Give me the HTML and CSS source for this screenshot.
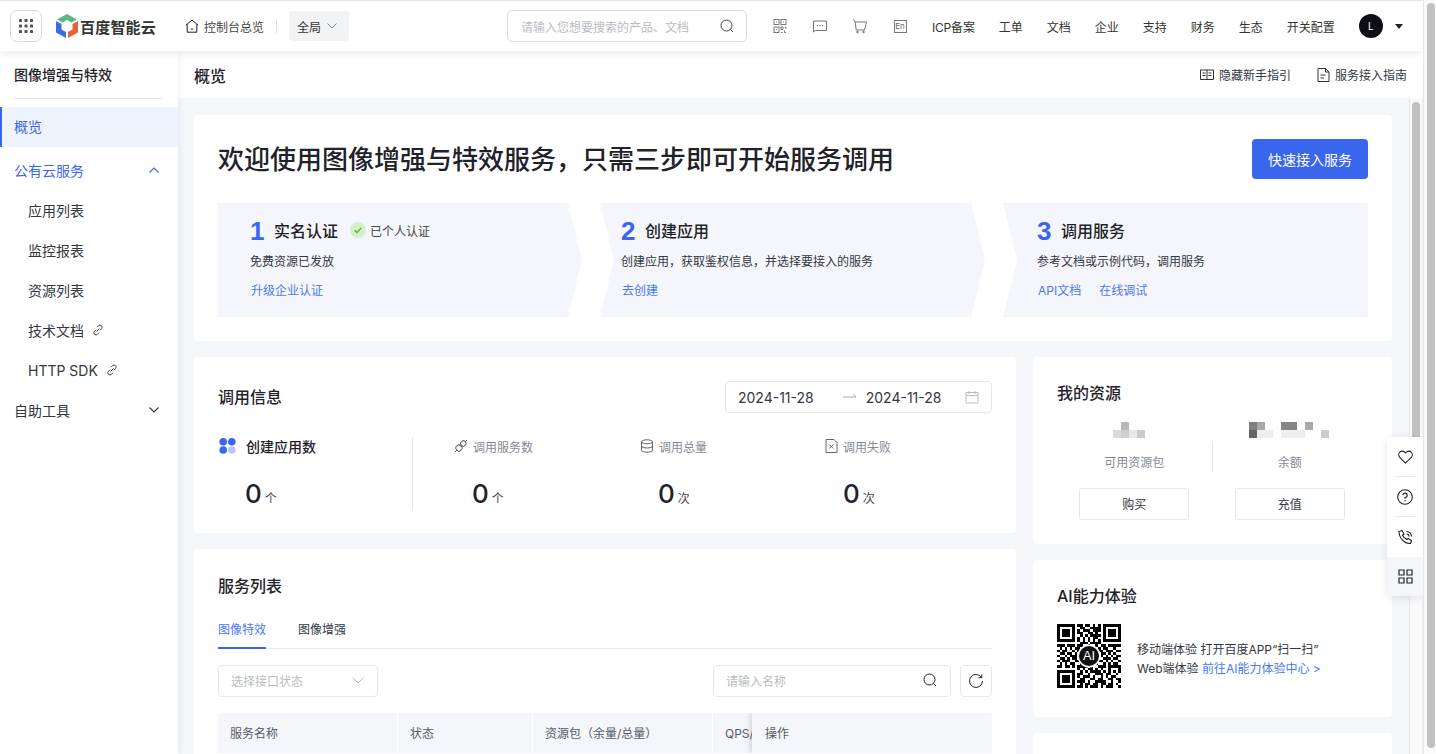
FILE: index.html
```html
<!DOCTYPE html>
<html lang="zh">
<head>
    <meta charset="UTF-8">
    <meta name="viewport" content="width=device-width, initial-scale=1.0">
    <title>图像增强与特效 - 概览</title>
    <link rel="stylesheet" href="styles.css">
</head>
<body>
<div class="page">
    <div class="app">
        <!-- 顶部导航 -->
        <header class="topbar">
            <button class="apps-btn" aria-label="产品">
                <svg width="14" height="14" viewBox="0 0 14 14" fill="#555"><rect x="0" y="0" width="3" height="3" rx=".6"/><rect x="5.5" y="0" width="3" height="3" rx=".6"/><rect x="11" y="0" width="3" height="3" rx=".6"/><rect x="0" y="5.5" width="3" height="3" rx=".6"/><rect x="5.5" y="5.5" width="3" height="3" rx=".6"/><rect x="11" y="5.5" width="3" height="3" rx=".6"/><rect x="0" y="11" width="3" height="3" rx=".6"/><rect x="5.5" y="11" width="3" height="3" rx=".6"/><rect x="11" y="11" width="3" height="3" rx=".6"/></svg>
            </button>
            <div class="logo">
                <svg width="22" height="24" viewBox="0 0 22 24"><path fill="#5cb585" d="M11 0l10 5.500-5.500 3L11 6 6.500 8.500 1 5.500z"/><path fill="#3b6de8" d="M0 7l5.500 3v5.500l4.500 2.500v6L0 18.500z"/><path fill="#e2633c" d="M22 7l-5.500 3v5.500L12 18v6l10-5.500z"/></svg>
                <span class="logo-text">百度智能云</span>
            </div>
            <a class="home-link">
                <svg width="14" height="14" viewBox="0 0 14 14" fill="none" stroke="#222" stroke-width="1"><path d="M.8 6.200L7 1l6.200 5.200M2.200 5.200v8h9.600v-8"/><path d="M5.800 10h2.400"/></svg>
                控制台总览
            </a>
            <span class="top-divider"></span>
            <div class="region">全局
                <svg width="10" height="6" viewBox="0 0 10 6" fill="none" stroke="#888"><path d="M.5.500L5 5 9.500.500"/></svg>
            </div>
            <div class="top-search">
                <span>请输入您想要搜索的产品、文档</span>
                <svg width="14" height="14" viewBox="0 0 14 14" fill="none" stroke="#444"><circle cx="6.500" cy="6.500" r="5.500"/><path d="M10.500 10.500l2.500 2.500"/></svg>
            </div>
            <div class="top-icons">
                <svg width="16" height="16" viewBox="0 0 16 16" fill="none" stroke="#777"><rect x="2" y="1.500" width="5" height="5"/><rect x="9" y="1.500" width="5" height="5"/><rect x="2" y="9" width="5" height="5.500"/><path d="M9 9h2v2.500H9zM13 9h1v2M9 14.500h1.500M12.500 12.500v2h1.500"/><path d="M4 3.500h1v1H4zM11 3.500h1v1h-1zM4 11.200h1v1H4z" fill="#777" stroke="none"/></svg>
                <svg width="16" height="16" viewBox="0 0 16 16" fill="none" stroke="#777"><path d="M1.500 3h13v9.500H3.500l-2 1.500z"/><path d="M5 7.700h1.200M7.500 7.700h1.200M10 7.700h1.200" stroke-width="1.200"/></svg>
                <svg width="16" height="16" viewBox="0 0 16 16" fill="none" stroke="#777"><path d="M1 1.500l2 1.500 1.200 9h8.300L14.500 4H3.300"/><circle cx="5.500" cy="14" r=".8" fill="#777"/><circle cx="11.500" cy="14" r=".8" fill="#777"/></svg>
                <span class="lang-icon">En</span>
            </div>
            <nav class="top-nav">
                <a>ICP备案</a><a>工单</a><a>文档</a><a>企业</a><a>支持</a><a>财务</a><a>生态</a><a>开关配置</a>
            </nav>
            <div class="avatar">L</div>
            <span class="caret"></span>
        </header>

        <div class="layout">
            <!-- 左侧菜单 -->
            <aside class="sidebar">
                <h2 class="side-title">图像增强与特效</h2>
                <ul class="menu">
                    <li class="menu-item active">概览</li>
                    <li class="menu-item group open">公有云服务
                        <svg width="10" height="6" viewBox="0 0 10 6" fill="none" stroke="#3a66ee" stroke-width="1.100"><path d="M.5 5.500L5 1l4.500 4.500"/></svg>
                    </li>
                    <li class="menu-item sub">应用列表</li>
                    <li class="menu-item sub">监控报表</li>
                    <li class="menu-item sub">资源列表</li>
                    <li class="menu-item sub">技术文档
                        <svg class="chain" width="12" height="12" viewBox="0 0 12 12" fill="none" stroke="#444"><path d="M5 3.200l1.500-1.500a2.100 2.100 0 013 3L8 6.200M7 8.800l-1.500 1.500a2.100 2.100 0 01-3-3L4 5.800M4.500 7.500l3-3"/></svg>
                    </li>
                    <li class="menu-item sub">HTTP SDK
                        <svg class="chain" width="12" height="12" viewBox="0 0 12 12" fill="none" stroke="#444"><path d="M5 3.200l1.500-1.500a2.100 2.100 0 013 3L8 6.200M7 8.800l-1.500 1.500a2.100 2.100 0 01-3-3L4 5.800M4.500 7.500l3-3"/></svg>
                    </li>
                    <li class="menu-item group">自助工具
                        <svg width="10" height="6" viewBox="0 0 10 6" fill="none" stroke="#333" stroke-width="1.100"><path d="M.5.500L5 5 9.500.500"/></svg>
                    </li>
                </ul>
            </aside>

            <main class="main">
                <div class="title-bar">
                    <h1>概览</h1>
                    <div class="title-actions">
                        <a>
                            <svg width="14" height="12" viewBox="0 0 14 12" fill="none" stroke="#333"><path d="M.5 1h13v9.500H.5zM7 1v9.500M2.500 4h3M8.500 4h3M2.500 6.500h3M8.500 6.500h3"/></svg>
                            隐藏新手指引
                        </a>
                        <a>
                            <svg width="13" height="14" viewBox="0 0 13 14" fill="none" stroke="#333"><path d="M1 .5h7.500L12 4v9.500H1zM8.500.5V4H12M3.500 7h5M3.500 10h3.500"/></svg>
                            服务接入指南
                        </a>
                    </div>
                </div>

                <div class="body-row">
                    <div class="content">
                        <section class="card hero">
                            <div class="hero-head">
                                <h2>欢迎使用图像增强与特效服务，只需三步即可开始服务调用</h2>
                                <button class="primary-btn">快速接入服务</button>
                            </div>
                            <div class="steps">
                                <div class="step step-first">
                                    <div class="step-title"><b>1</b><strong>实名认证</strong>
                                        <span class="verified">
                                            <svg width="16" height="16" viewBox="0 0 16 16"><circle cx="8" cy="8" r="8" fill="#d5efcb"/><path d="M4.800 8.200l2.200 2.200 4.200-4.400" fill="none" stroke="#52b52f" stroke-width="1.400"/></svg>
                                            已个人认证
                                        </span>
                                    </div>
                                    <p>免费资源已发放</p>
                                    <div class="step-links"><a>升级企业认证</a></div>
                                </div>
                                <div class="step step-middle">
                                    <div class="step-title"><b>2</b><strong>创建应用</strong></div>
                                    <p>创建应用，获取鉴权信息，并选择要接入的服务</p>
                                    <div class="step-links"><a>去创建</a></div>
                                </div>
                                <div class="step step-last">
                                    <div class="step-title"><b>3</b><strong>调用服务</strong></div>
                                    <p>参考文档或示例代码，调用服务</p>
                                    <div class="step-links"><a>API文档</a><a>在线调试</a></div>
                                </div>
                            </div>
                        </section>

                        <div class="columns">
                            <div class="col-left">
                                <section class="card info">
                                    <div class="info-head">
                                        <h3>调用信息</h3>
                                        <div class="date-range">
                                            <span>2024-11-28</span>
                                            <svg class="range-arrow" width="14" height="6" viewBox="0 0 14 6" fill="none" stroke="#aaa"><path d="M0 3h13M10.500.5L13 3"/></svg>
                                            <span>2024-11-28</span>
                                            <svg class="calendar" width="14" height="14" viewBox="0 0 14 14" fill="none" stroke="#bbb"><path d="M1 2.500h12v10.500H1zM1 5.500h12M4 1v3M10 1v3"/></svg>
                                        </div>
                                    </div>
                                    <div class="stats">
                                        <div class="stat stat-main">
                                            <div class="stat-label">
                                                <svg width="17" height="16" viewBox="0 0 17 16"><circle cx="4.200" cy="3.800" r="3.800" fill="#3a66ee"/><circle cx="12.800" cy="3.800" r="3.800" fill="#3a66ee"/><circle cx="4.200" cy="12" r="3.800" fill="#3a66ee"/><circle cx="12.800" cy="12" r="3.800" fill="#b5c9f8"/></svg>
                                                <span>创建应用数</span>
                                            </div>
                                            <div class="stat-value">0<small>个</small></div>
                                        </div>
                                        <div class="stat stat-second">
                                            <div class="stat-label">
                                                <svg width="14" height="14" viewBox="0 0 14 14" fill="none" stroke="#666"><path d="M1 13l2-2M13 1l-2 2"/><rect x="2.200" y="6.200" width="5.500" height="5.500" rx="1.500" transform="rotate(-45 5 9)"/><rect x="6.800" y="2" width="5" height="5" rx="1.500" transform="rotate(-45 9.300 4.500)"/></svg>
                                                <span>调用服务数</span>
                                            </div>
                                            <div class="stat-value">0<small>个</small></div>
                                        </div>
                                        <div class="stat">
                                            <div class="stat-label">
                                                <svg width="14" height="14" viewBox="0 0 14 14" fill="none" stroke="#666"><ellipse cx="7" cy="2.800" rx="5.500" ry="2"/><path d="M1.500 2.800v8.400c0 1.100 2.500 2 5.500 2s5.500-.9 5.500-2V2.800M1.500 7c0 1.100 2.500 2 5.500 2s5.500-.9 5.500-2"/></svg>
                                                <span>调用总量</span>
                                            </div>
                                            <div class="stat-value">0<small>次</small></div>
                                        </div>
                                        <div class="stat">
                                            <div class="stat-label">
                                                <svg width="13" height="14" viewBox="0 0 13 14" fill="none" stroke="#666"><path d="M1 .5h8L12 3.500v10H1zM4.300 5.500l4 4M8.300 5.500l-4 4"/></svg>
                                                <span>调用失败</span>
                                            </div>
                                            <div class="stat-value">0<small>次</small></div>
                                        </div>
                                    </div>
                                </section>

                                <section class="card services">
                                    <h3>服务列表</h3>
                                    <div class="tabs">
                                        <a class="tab active">图像特效</a>
                                        <a class="tab">图像增强</a>
                                    </div>
                                    <div class="filters">
                                        <div class="field select-field">选择接口状态
                                            <svg width="12" height="7" viewBox="0 0 12 7" fill="none" stroke="#bbb"><path d="M.5.500l5.500 5.500L11.500.500"/></svg>
                                        </div>
                                        <div class="field search-field">请输入名称
                                            <svg width="14" height="14" viewBox="0 0 14 14" fill="none" stroke="#222"><circle cx="6.500" cy="6.500" r="5.500"/><path d="M10.500 10.500l2.500 2.500"/></svg>
                                        </div>
                                        <button class="refresh-btn" aria-label="刷新">
                                            <svg width="16" height="16" viewBox="0 0 16 16" fill="none" stroke="#222"><path d="M13.500 4.500A6.500 6.500 0 1014.500 8"/><path d="M10.500 4.700h3.300V1.400"/></svg>
                                        </button>
                                    </div>
                                    <div class="table-head">
                                        <div class="th th-name">服务名称</div>
                                        <div class="th th-state">状态</div>
                                        <div class="th th-pack">资源包（余量/总量）</div>
                                        <div class="th th-qps">QPS/</div>
                                        <div class="th th-action">操作</div>
                                    </div>
                                </section>
                            </div>

                            <div class="col-right">
                                <section class="card resources">
                                    <h3>我的资源</h3>
                                    <div class="res-grid">
                                        <div class="res-item">
                                            <svg class="mosaic mosaic-pack" width="32" height="16" viewBox="0 0 32 16"><rect x="8" y="0" width="8" height="8" fill="#b8b8b8"/><rect x="0" y="8" width="8" height="8" fill="#dadada"/><rect x="8" y="8" width="8" height="8" fill="#d0d0d0"/><rect x="16" y="8" width="8" height="8" fill="#e8e8e8"/><rect x="24" y="8" width="8" height="8" fill="#cacaca"/></svg>
                                            <span class="res-label">可用资源包</span>
                                            <button class="plain-btn">购买</button>
                                        </div>
                                        <span class="res-divider"></span>
                                        <div class="res-item">
                                            <svg class="mosaic mosaic-money" width="80" height="16" viewBox="0 0 80 16"><rect x="0" y="0" width="8" height="8" fill="#808080"/><rect x="8" y="0" width="8" height="8" fill="#a8a8a8"/><rect x="32" y="0" width="16" height="8" fill="#858585"/><rect x="56" y="0" width="8" height="8" fill="#a8a8a8"/><rect x="0" y="8" width="8" height="8" fill="#666"/><rect x="8" y="8" width="16" height="8" fill="#eee"/><rect x="32" y="8" width="24" height="8" fill="#eee"/><rect x="72" y="8" width="8" height="8" fill="#ccc"/></svg>
                                            <span class="res-label">余额</span>
                                            <button class="plain-btn">充值</button>
                                        </div>
                                    </div>
                                </section>

                                <section class="card ai-card">
                                    <h3>AI能力体验</h3>
                                    <div class="ai-body">
                                        <svg class="qr" width="64" height="64" viewBox="0 0 25 25" shape-rendering="crispEdges">
                                            <path fill="#000" d="M0 0h7v7H0zM1 1v5h5V1zM2 2h3v3H2zM18 0h7v7h-7zM19 1v5h5V1zM20 2h3v3h-3zM0 18h7v7H0zM1 19v5h5v-5zM2 20h3v3H2z" fill-rule="evenodd"/>
                                            <path stroke="#000" fill="none" d="M8 .5h2M11 .5h2M14 .5h1M16 .5h1M9 1.500h2M13 1.500h2M15 1.500h2M8 2.500h1M10 2.500h3M14 2.500h3M8 3.500h2M12 3.500h2M15 3.500h1M9 4.500h1M11 4.500h1M13 4.500h4M8 5.500h1M10 5.500h1M12 5.500h1M14 5.500h2M8 6.500h1M10 6.500h1M12 6.500h1M14 6.500h1M16 6.500h1M9 7.500h3M13 7.500h4M0 8.500h3M4 8.500h3M8 8.500h2M12 8.500h1M15 8.500h1M17 8.500h2M20 8.500h5M1 9.500h1M3 9.500h1M5 9.500h1M7 9.500h2M10 9.500h2M16 9.500h1M18 9.500h2M22 9.500h1M0 10.500h1M2 10.500h2M6 10.500h1M8 10.500h1M16 10.500h2M19 10.500h3M23 10.500h2M1 11.500h2M4 11.500h2M7 11.500h1M17 11.500h2M20 11.500h1M22 11.500h1M0 12.500h1M3 12.500h1M5 12.500h3M17 12.500h1M19 12.500h1M21 12.500h1M23 12.500h2M1 13.500h2M4 13.500h1M6 13.500h2M18 13.500h3M22 13.500h2M0 14.500h1M2 14.500h3M7 14.500h2M16 14.500h2M19 14.500h1M21 14.500h1M24 14.500h1M1 15.500h1M3 15.500h1M5 15.500h2M9 15.500h2M14 15.500h2M18 15.500h1M20 15.500h1M22 15.500h2M0 16.500h2M3 16.500h2M6 16.500h1M8 16.500h4M13 16.500h1M16 16.500h3M20 16.500h5M8 17.500h1M10 17.500h1M12 17.500h2M15 17.500h1M17 17.500h1M20 17.500h1M24 17.500h1M9 18.500h1M11 18.500h1M13 18.500h4M18 18.500h1M20 18.500h1M22 18.500h1M24 18.500h1M8 19.500h2M12 19.500h1M15 19.500h3M19 19.500h2M23 19.500h1M8 20.500h1M10 20.500h3M14 20.500h1M17 20.500h1M19 20.500h1M21 20.500h2M9 21.500h2M13 21.500h2M16 21.500h2M20 21.500h2M23 21.500h2M8 22.500h3M12 22.500h1M15 22.500h3M18 22.500h1M21 22.500h1M24 22.500h1M9 23.500h1M11 23.500h2M14 23.500h2M17 23.500h2M20 23.500h2M23 23.500h1M8 24.500h2M11 24.500h1M13 24.500h3M17 24.500h1M19 24.500h3M24 24.500h1"/>
                                            <circle cx="12.500" cy="12.500" r="4.200" fill="#111" stroke="#fff" stroke-width=".6" shape-rendering="auto"/>
                                            <text x="12.500" y="14.200" text-anchor="middle" class="qr-text">AI</text>
                                        </svg>
                                        <div class="ai-text">
                                            <p>移动端体验 打开百度APP“扫一扫”</p>
                                            <p>Web端体验 <a>前往AI能力体验中心 &gt;</a></p>
                                        </div>
                                    </div>
                                </section>

                                <section class="card blank-card"></section>
                            </div>
                        </div>
                    </div>

                    <div class="inner-scroll"><span class="thumb"></span></div>
                </div>
            </main>
        </div>

        <!-- 右侧悬浮工具 -->
        <div class="float-tools">
            <div class="tool">
                <svg width="15" height="14" viewBox="0 0 16 15" fill="none" stroke="#222" stroke-width="1.100"><path d="M8 14L1.800 7.800a3.800 3.800 0 010-5.400 3.900 3.900 0 015.300 0L8 3.200l1-.9a3.900 3.900 0 015.200.1 3.800 3.800 0 010 5.400z"/></svg>
            </div>
            <div class="tool">
                <svg width="16" height="16" viewBox="0 0 16 16" fill="none" stroke="#222" stroke-width="1.100"><circle cx="8" cy="8" r="7.300"/><path d="M5.800 6.300A2.200 2.200 0 118 8.500v1.300"/><path d="M8 11v1.300"/></svg>
            </div>
            <div class="tool">
                <svg width="15" height="15" viewBox="0 0 15 15" fill="none" stroke="#222" stroke-width="1.100"><path d="M1 1.500l3-1 2 3.500-1.500 1.200c.8 2 2.300 3.500 4.300 4.300L10 8.500l3.500 2-1 3C6.500 14 1 8 1 1.500z"/><path d="M8.500 1.500a5 5 0 015 5M8.500 4a2.500 2.500 0 012.500 2.500"/></svg>
            </div>
            <div class="tool tool-active">
                <svg width="15" height="15" viewBox="0 0 15 15" fill="none" stroke="#222" stroke-width="1.200"><path d="M1 1h5v5H1zM9 1h5v5H9zM1 9h5v5H1zM9 9h5v5H9z"/></svg>
            </div>
        </div>
    </div>
    <div class="outer-scroll"><span class="thumb"></span></div>
</div>
</body>
</html>
```

FILE: styles.css
```css
:root {
    --primary-color: #3a66ee;
    --link-color: #4a78f0;
    --background-color: #f5f6f9;
    --card-background: #ffffff;
    --text-color: #1f2229;
    --text-soft: #555b66;
    --text-muted: #858a94;
    --text-hold: #b9bcc4;
    --border-color: #e6e8ec;
}

* {
    box-sizing: border-box;
}

body {
    margin: 0;
    font-family: Inter, 'Noto Sans CJK SC', sans-serif;
    font-size: 12px;
    color: var(--text-color);
    background: #fff;
    overflow: hidden;
}

h1, h2, h3, p, ul {
    margin: 0;
    padding: 0;
}

.page {
    display: flex;
    height: 754px;
    overflow: hidden;
}

.app {
    position: relative;
    flex: none;
    width: 1423px;
    display: flex;
    flex-direction: column;
    overflow: hidden;
}

.outer-scroll {
    flex: none;
    width: 13px;
    padding: 3px 1px 6px 3px;
    border-left: 1px solid var(--border-color);
    background: #fafafa;
}

.outer-scroll .thumb,
.inner-scroll .thumb {
    display: block;
    width: 8px;
    height: 100%;
    border-radius: 4px;
    background: #c1c1c1;
}

/* 顶部导航 */
.topbar {
    position: relative;
    z-index: 3;
    flex: none;
    height: 51px;
    display: flex;
    align-items: center;
    padding: 0 0 0 10px;
    background: #fff;
    border-top: 1px solid #e4e4e4;
    box-shadow: 0 2px 8px rgba(0, 0, 0, 0.09);
}

.apps-btn {
    width: 32px;
    height: 32px;
    display: flex;
    align-items: center;
    justify-content: center;
    padding: 0;
    background: #fff;
    border: 1px solid #d8d9dc;
    border-radius: 7px;
}

.logo {
    display: flex;
    align-items: center;
    gap: 2px;
    margin-left: 14px;
}

.logo-text {
    font-size: 15px;
    font-weight: 700;
    letter-spacing: 0.2px;
    color: #333;
}

.home-link {
    display: flex;
    align-items: center;
    gap: 5px;
    margin-left: 29px;
    color: #444;
}

.top-divider {
    width: 1px;
    height: 14px;
    margin: 0 12px;
    background: #e1e1e1;
}

.region {
    width: 60px;
    height: 30px;
    display: flex;
    align-items: center;
    justify-content: space-between;
    padding: 0 12px 0 8px;
    background: #f2f3f5;
    border-radius: 4px;
    color: #333;
}

.top-search {
    width: 240px;
    height: 32px;
    display: flex;
    align-items: center;
    justify-content: space-between;
    margin-left: 158px;
    padding: 0 12px 0 13px;
    border: 1px solid #d9dade;
    border-radius: 5px;
    color: var(--text-hold);
}

.top-icons {
    display: flex;
    align-items: center;
    gap: 24px;
    margin-left: 25px;
}

.top-icons svg {
    display: block;
}

.lang-icon {
    width: 13px;
    height: 13px;
    margin: 0 1.5px;
    border: 1px solid #777;
    color: #666;
    font-size: 8px;
    line-height: 11px;
    text-align: center;
}

.top-nav {
    display: flex;
    gap: 24px;
    margin-left: 24px;
    color: #333;
}

.top-nav a:first-child {
    letter-spacing: -0.2px;
}

.avatar {
    width: 24px;
    height: 24px;
    margin-left: 24px;
    background: #0d0f14;
    border-radius: 50%;
    color: #fff;
    font-size: 10px;
    line-height: 24px;
    text-align: center;
}

.caret {
    width: 0;
    height: 0;
    margin-left: 12px;
    border-left: 4px solid transparent;
    border-right: 4px solid transparent;
    border-top: 5px solid #222;
}

.layout {
    flex: 1;
    display: flex;
    min-height: 0;
}

/* 左侧菜单 */
.sidebar {
    position: relative;
    z-index: 2;
    flex: none;
    width: 178px;
    background: #fff;
    box-shadow: 1px 0 6px rgba(0, 0, 0, 0.07);
}

.side-title {
    height: 48px;
    margin: 0 16px 8px 14px;
    border-bottom: 1px solid var(--border-color);
    font-size: 14px;
    font-weight: 500;
    line-height: 47px;
}

.menu {
    list-style: none;
}

.menu-item {
    height: 40px;
    display: flex;
    align-items: center;
    padding-left: 14px;
    padding-bottom: 2px;
    font-size: 14px;
    color: #33373f;
}

.menu-item.active {
    padding-left: 12px;
    margin-bottom: 4px;
    background: #eef3fe;
    border-left: 2px solid var(--primary-color);
    color: var(--primary-color);
}

.menu-item.group {
    justify-content: space-between;
    padding-right: 19px;
}

.menu-item.open {
    color: var(--primary-color);
}

.menu-item.sub {
    padding-left: 28px;
}

.chain {
    margin-left: 8px;
}

/* 主内容 */
.main {
    flex: 1;
    min-width: 0;
    display: flex;
    flex-direction: column;
    background: var(--background-color);
}

.title-bar {
    flex: none;
    height: 47px;
    display: flex;
    align-items: center;
    justify-content: space-between;
    padding: 0 16px;
    background: #fff;
}

.title-bar h1 {
    font-size: 16px;
    font-weight: 500;
}

.title-actions {
    display: flex;
    gap: 26px;
    color: #33373f;
}

.title-actions a {
    display: flex;
    align-items: center;
    gap: 5px;
}

.body-row {
    flex: 1;
    min-height: 0;
    display: flex;
}

.content {
    flex: 1;
    min-width: 0;
    padding: 17px 17px 0 16px;
    overflow: hidden;
}

.inner-scroll {
    flex: none;
    width: 14px;
    padding: 4px 3px 0 2px;
    background: #fafafa;
    border-left: 1px solid var(--border-color);
    border-right: 1px solid #efefef;
}

.inner-scroll .thumb {
    height: 470px;
}

.card {
    background: var(--card-background);
    border-radius: 4px;
}

.card h3 {
    font-size: 16px;
    font-weight: 500;
    line-height: 22px;
}

/* 欢迎区 */
.hero {
    height: 226px;
    padding: 24px;
}

.hero-head {
    height: 64px;
    display: flex;
    justify-content: space-between;
}

.hero-head h2 {
    font-size: 26px;
    font-weight: 500;
    line-height: 42px;
}

.primary-btn {
    width: 116px;
    height: 40px;
    background: var(--primary-color);
    border: none;
    border-radius: 4px;
    color: #fff;
    font-family: inherit;
    font-size: 14px;
}

.steps {
    display: flex;
    gap: 18px;
}

.step {
    flex: none;
    height: 114px;
    padding-top: 14px;
    background: #f4f6fc;
}

.step-first {
    width: 364px;
    padding-left: 32px;
    clip-path: polygon(0 0, 350px 0, 100% 50%, 350px 100%, 0 100%);
}

.step-middle {
    width: 385px;
    padding-left: 21px;
    clip-path: polygon(0 0, 371px 0, 100% 50%, 371px 100%, 0 100%, 14px 50%);
}

.step-last {
    width: 365px;
    padding-left: 34px;
    clip-path: polygon(0 0, 100% 0, 100% 100%, 0 100%, 14px 50%);
}

.step-title {
    height: 26px;
    display: flex;
    align-items: center;
}

.step-title b {
    width: 24px;
    padding-top: 2px;
    font-family: 'Liberation Sans', sans-serif;
    font-size: 26px;
    font-weight: 700;
    line-height: 26px;
    color: var(--primary-color);
}

.step-title strong {
    font-size: 16px;
    font-weight: 500;
}

.verified {
    display: flex;
    align-items: center;
    gap: 4px;
    margin-left: 12px;
    color: #444;
}

.step p {
    margin-top: 10px;
    line-height: 18px;
    color: #33373f;
}

.step-links {
    display: flex;
    gap: 18px;
    margin-top: 11px;
    padding-left: 1px;
    line-height: 18px;
    color: var(--link-color);
}

/* 两栏 */
.columns {
    display: flex;
    gap: 17px;
    margin-top: 16px;
}

.col-left {
    width: 822px;
    display: flex;
    flex-direction: column;
    gap: 16px;
}

.col-right {
    width: 359px;
    display: flex;
    flex-direction: column;
    gap: 16px;
}

/* 调用信息 */
.info {
    height: 176px;
    padding: 24px;
}

.info-head {
    display: flex;
    align-items: center;
    justify-content: space-between;
}

.info-head h3 {
    padding-bottom: 1px;
}

.date-range {
    width: 267px;
    height: 32px;
    display: flex;
    align-items: center;
    padding-left: 12px;
    border: 1px solid var(--border-color);
    border-radius: 4px;
    font-size: 14px;
    color: #33373f;
    white-space: nowrap;
}

.range-arrow {
    margin: 0 9px 0 29px;
}

.calendar {
    margin-left: 24px;
}

.stats {
    display: grid;
    grid-template-columns: 194px 227px 185px 1fr;
    margin-top: 25px;
    margin-left: 1px;
}

.stat {
    height: 72px;
}

.stat-main {
    border-right: 1px solid #e2e4e8;
}

.stat-second {
    padding-left: 41px;
}

.stat-label {
    height: 16px;
    display: flex;
    align-items: center;
    gap: 5px;
    color: var(--text-muted);
}

.stat-main .stat-label {
    gap: 10px;
    font-size: 14px;
    font-weight: 500;
    color: var(--text-color);
}

.stat-value {
    margin-top: 22px;
    margin-left: 18px;
    font-size: 26px;
    font-weight: 500;
    line-height: 36px;
}

.stat-main .stat-value {
    margin-left: 26px;
}

.stat-value small {
    margin-left: 3px;
    font-size: 12px;
    font-weight: 400;
    color: #444;
}

/* 服务列表 */
.services {
    height: 300px;
    padding: 26px 24px 0;
}

.tabs {
    display: flex;
    gap: 32px;
    height: 34px;
    margin-top: 18px;
    border-bottom: 1px solid var(--border-color);
}

.tab {
    height: 34px;
    line-height: 30px;
    color: #33373f;
}

.tab.active {
    border-bottom: 2px solid var(--primary-color);
    color: var(--link-color);
}

.filters {
    display: flex;
    margin-top: 16px;
}

.field {
    height: 32px;
    display: flex;
    align-items: center;
    justify-content: space-between;
    padding: 0 13px 2px 12px;
    border: 1px solid var(--border-color);
    border-radius: 4px;
    color: var(--text-hold);
}

.select-field {
    width: 160px;
    margin-right: 335px;
}

.search-field {
    width: 238px;
}

.refresh-btn {
    width: 32px;
    height: 32px;
    display: flex;
    align-items: center;
    justify-content: center;
    margin-left: 9px;
    padding: 0;
    background: #fff;
    border: 1px solid var(--border-color);
    border-radius: 4px;
}

.table-head {
    display: flex;
    height: 40px;
    margin-top: 16px;
    background: var(--background-color);
    border-radius: 4px 4px 0 0;
    color: var(--text-soft);
    overflow: hidden;
}

.th {
    flex: none;
    padding-left: 12px;
    line-height: 42px;
    border-right: 1px solid #fff;
    white-space: nowrap;
}

.th-name { width: 180px; }
.th-state { width: 135px; }
.th-pack { width: 180px; }
.th-qps { width: 39px; border-right: none; }

.th-action {
    width: 240px;
    padding-left: 13px;
    border-right: none;
    box-shadow: -3px 0 4px rgba(0, 0, 0, 0.1);
    background: var(--background-color);
}

/* 我的资源 */
.resources {
    height: 187px;
    padding: 25px 24px 0;
}

.res-grid {
    display: flex;
    justify-content: center;
    margin-top: 18px;
    padding-right: 1px;
}

.res-item {
    width: 155px;
    display: flex;
    flex-direction: column;
    align-items: center;
}

.mosaic {
    display: block;
}

.mosaic-pack {
    margin-right: 10px;
}

.mosaic-money {
    margin-right: 2px;
}

.res-label {
    margin-top: 16px;
    line-height: 18px;
    color: var(--text-muted);
}

.res-divider {
    width: 1px;
    height: 30px;
    margin-top: 20px;
    background: #e2e4e8;
}

.plain-btn {
    width: 110px;
    height: 32px;
    margin-top: 16px;
    padding: 0 0 2px;
    background: #fff;
    border: 1px solid var(--border-color);
    border-radius: 3px;
    font-family: inherit;
    font-size: 12px;
    color: #33373f;
}

/* AI能力体验 */
.ai-card {
    height: 157px;
    padding: 25px 24px 0;
}

.ai-body {
    display: flex;
    gap: 16px;
    margin-top: 17px;
}

.qr {
    flex: none;
    display: block;
}

.qr-text {
    font-family: 'Liberation Sans', sans-serif;
    font-size: 5px;
    fill: #fff;
}

.ai-text {
    padding-top: 16px;
    line-height: 19px;
    color: #33373f;
}

.ai-text a {
    color: var(--link-color);
}

.blank-card {
    height: 60px;
}

/* 右侧悬浮工具 */
.float-tools {
    position: absolute;
    right: 0;
    top: 437px;
    z-index: 4;
    width: 36px;
    height: 159px;
    background: #fff;
    border-radius: 4px 0 0 4px;
    box-shadow: 0 2px 10px rgba(0, 0, 0, 0.1);
    overflow: hidden;
}

.tool {
    height: 40px;
    display: flex;
    align-items: center;
    justify-content: center;
    position: relative;
}

.tool:nth-child(1)::after,
.tool:nth-child(2)::after {
    content: '';
    position: absolute;
    left: 8px;
    right: 8px;
    bottom: 0;
    height: 1px;
    background: #e8e9ec;
}

.tool-active {
    height: 39px;
    background: var(--background-color);
}
```
